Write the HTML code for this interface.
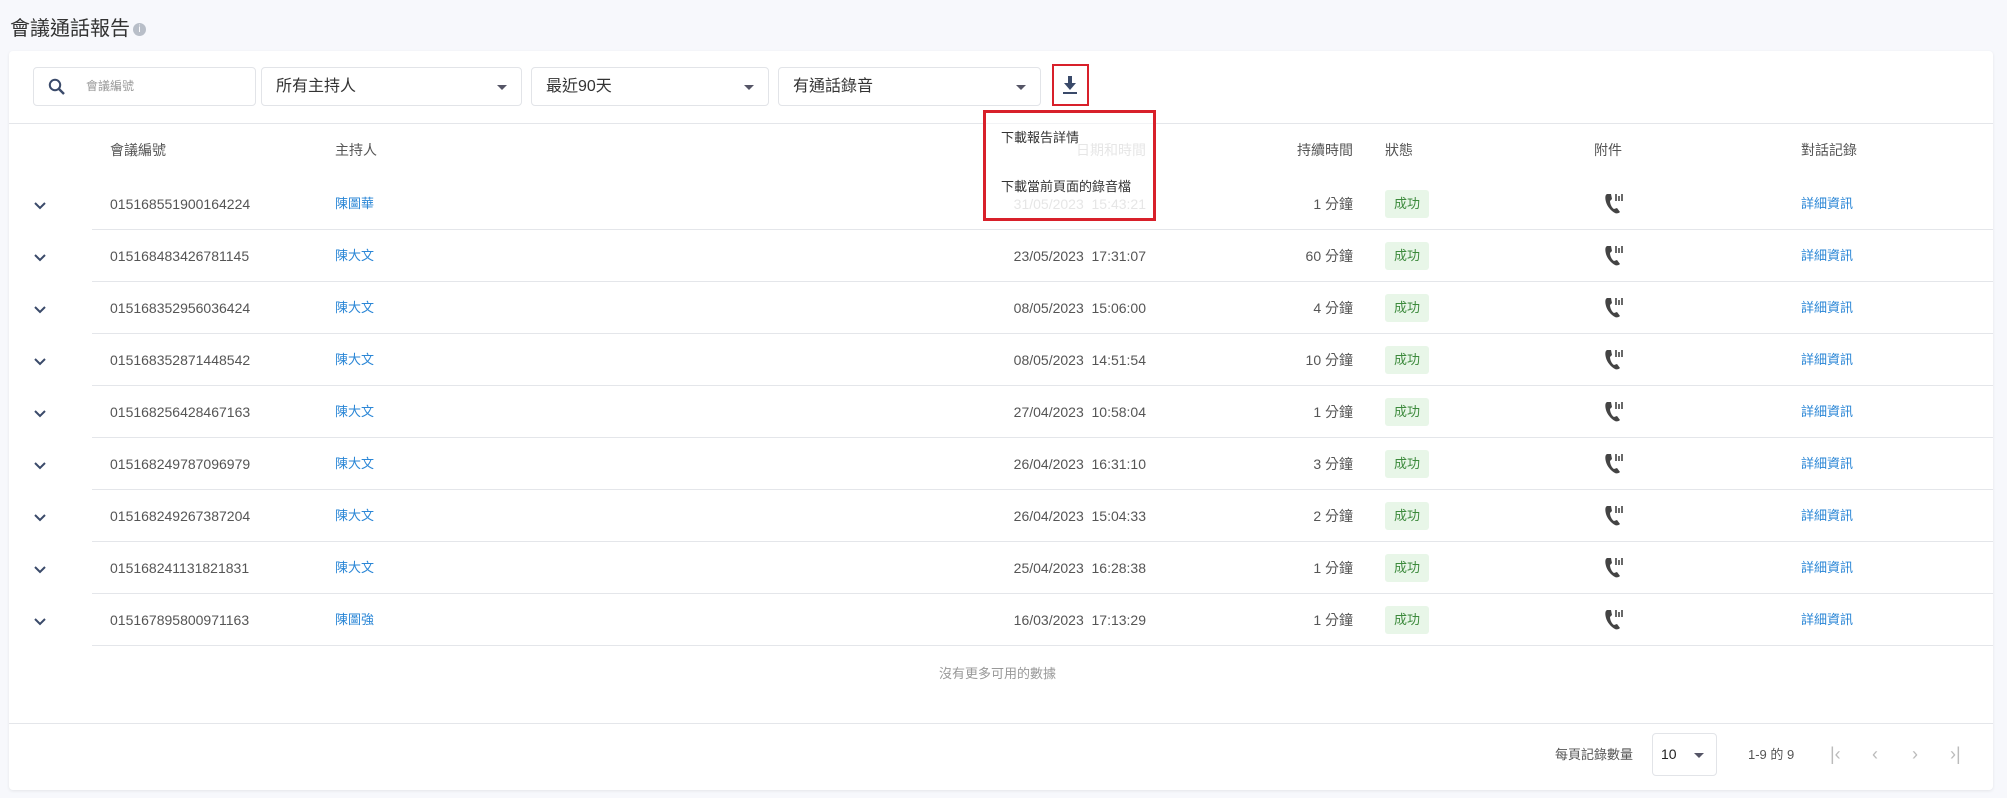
<!DOCTYPE html>
<html><head><meta charset="utf-8"><style>
*{box-sizing:border-box;margin:0;padding:0}
body{width:2007px;height:798px;background:#f7f8fc;font-family:"Liberation Sans","Noto Sans CJK TC",sans-serif;color:#555;font-size:14px;position:relative;overflow:hidden}
.abs{position:absolute}
.title{left:10px;top:12px;font-size:20px;color:#333}
.info{display:inline-block;width:13px;height:13px;border-radius:50%;background:#b8bec8;color:#fff;font-size:10px;text-align:center;line-height:13px;vertical-align:3px;margin-left:3px}
.card{left:9px;top:51px;width:1984px;height:739px;background:#fff;border-radius:4px;box-shadow:0 1px 3px rgba(0,0,0,.08)}
.box{position:absolute;top:67px;height:39px;border:1px solid #e2e4e8;border-radius:4px;background:#fff;font-size:16px;color:#333;line-height:37px;padding-left:14px}
.tri{position:absolute;right:14px;top:17px;width:0;height:0;border-left:5px solid transparent;border-right:5px solid transparent;border-top:5px solid #556}
.line{position:absolute;height:1px;background:#e4e6ea}
.cell{position:absolute;white-space:nowrap;line-height:20px}
.badge{position:absolute;width:44px;height:28px;background:#e8f6e8;color:#3c8a3c;border-radius:3px;text-align:center;line-height:28px;font-size:13px}
.link{color:#2a86d6}
</style></head><body>
<div class="abs title">會議通話報告<span class="info">i</span></div>
<div class="abs card"></div>
<div class="box" style="left:33px;width:223px;font-size:12px;color:#999;padding-left:52px">
<svg class="abs" style="left:14px;top:10px" width="18" height="18" viewBox="0 0 18 18"><circle cx="7" cy="7" r="5.2" fill="none" stroke="#3a4a6a" stroke-width="2"/><path d="M11 11l5 5" stroke="#3a4a6a" stroke-width="2.4"/></svg>會議編號</div>
<div class="box" style="left:261px;width:261px">所有主持人<span class="tri"></span></div>
<div class="box" style="left:531px;width:238px">最近90天<span class="tri"></span></div>
<div class="box" style="left:778px;width:263px">有通話錄音<span class="tri"></span></div>
<div class="abs" style="left:1052px;top:64px;width:37px;height:42px;border:2px solid #d8202a"></div>
<svg class="abs" style="left:1061px;top:75px" width="18" height="20" viewBox="0 0 18 20"><path d="M7 1h4v7h4l-6 7-6-7h4z" fill="#3a4a6a"/><rect x="2" y="17" width="14" height="2" fill="#3a4a6a"/></svg>

<div class="line" style="left:9px;width:1984px;top:123px"></div>
<div class="cell" style="left:110px;top:140px">會議編號</div>
<div class="cell" style="left:335px;top:140px">主持人</div>
<div class="cell" style="right:861px;top:140px;color:#ccc">日期和時間</div>
<div class="cell" style="right:654px;top:140px">持續時間</div>
<div class="cell" style="left:1385px;top:140px">狀態</div>
<div class="cell" style="left:1594px;top:140px">附件</div>
<div class="cell" style="left:1801px;top:140px">對話記錄</div>

<div id="rows"></div>
<script>
var d=[["015168551900164224","陳圖華","31/05/2023  15:43:21","1 分鐘"],["015168483426781145","陳大文","23/05/2023  17:31:07","60 分鐘"],["015168352956036424","陳大文","08/05/2023  15:06:00","4 分鐘"],["015168352871448542","陳大文","08/05/2023  14:51:54","10 分鐘"],["015168256428467163","陳大文","27/04/2023  10:58:04","1 分鐘"],["015168249787096979","陳大文","26/04/2023  16:31:10","3 分鐘"],["015168249267387204","陳大文","26/04/2023  15:04:33","2 分鐘"],["015168241131821831","陳大文","25/04/2023  16:28:38","1 分鐘"],["015167895800971163","陳圖強","16/03/2023  17:13:29","1 分鐘"]];
var h="";
for(var i=0;i<9;i++){var y=177+52*i,t=y+17;
h+='<div class="line" style="left:92px;width:1901px;top:'+(y+52)+'px"></div>';
h+='<svg class="abs" style="left:33px;top:'+(t+7)+'px" width="14" height="10" viewBox="0 0 14 10"><path d="M2 2l5 5 5-5" fill="none" stroke="#3a4a6a" stroke-width="2"/></svg>';
h+='<div class="cell" style="left:110px;top:'+t+'px">'+d[i][0]+'</div>';
h+='<div class="cell link" style="left:335px;top:'+t+'px;font-size:13px">'+d[i][1]+'</div>';
h+='<div class="cell" style="right:861px;top:'+t+'px;white-space:pre;'+(i==0?'color:#ccc':'')+'">'+d[i][2]+'</div>';
h+='<div class="cell" style="right:654px;top:'+t+'px">'+d[i][3]+'</div>';
h+='<div class="badge" style="left:1385px;top:'+(t-4)+'px">成功</div>';
h+='<svg class="abs" style="left:1604px;top:'+(t-2)+'px" width="20" height="22" viewBox="0 0 20 22"><path d="M3 2c-2 1-2 4-1 8s5 9 9 11c2 1 4 0 5-1l-3-4-3 1c-2-1-4-5-4-8l2-2-1-5z" fill="#444"/><path d="M12 2v7M15 4v5M18 2v7" stroke="#444" stroke-width="1.6"/></svg>';
h+='<div class="cell link" style="left:1801px;top:'+t+'px;font-size:13px">詳細資訊</div>';}
document.getElementById("rows").innerHTML=h;
</script>
<div class="cell" style="left:939px;top:664px;color:#999;font-size:13px">沒有更多可用的數據</div>
<div class="line" style="left:9px;width:1984px;top:723px"></div>
<div class="cell" style="left:1555px;top:745px;font-size:13px">每頁記錄數量</div>
<div class="abs" style="left:1652px;top:733px;width:65px;height:43px;border:1px solid #e2e4e8;border-radius:4px;font-size:14px;color:#222;line-height:41px;padding-left:8px">10<span class="tri" style="right:12px;top:19px"></span></div>
<div class="cell" style="left:1748px;top:745px;font-size:13px">1-9 的 9</div>
<div class="cell" style="left:1830px;top:744px;color:#bbb;font-size:18px">|‹</div>
<div class="cell" style="left:1872px;top:744px;color:#bbb;font-size:18px">‹</div>
<div class="cell" style="left:1912px;top:744px;color:#bbb;font-size:18px">›</div>
<div class="cell" style="left:1950px;top:744px;color:#bbb;font-size:18px">›|</div>

<div class="abs" style="left:983px;top:110px;width:173px;height:111px;border:3px solid #d8202a;background:rgba(255,255,255,.5)"></div>
<div class="cell" style="left:1001px;top:128px;font-size:13px;color:#333">下載報告詳情</div>
<div class="cell" style="left:1001px;top:177px;font-size:13px;color:#333">下載當前頁面的錄音檔</div>
</body></html>
